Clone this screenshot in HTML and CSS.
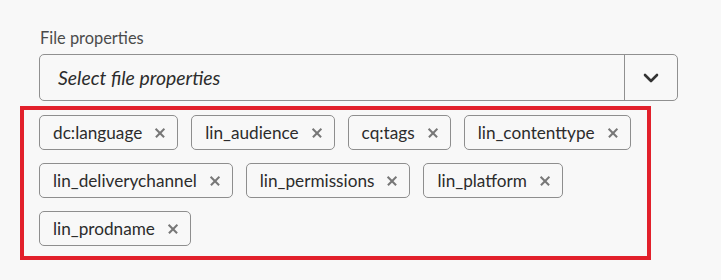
FILE: index.html
```html
<!DOCTYPE html>
<html lang="en">
<head>
    <meta charset="UTF-8">
    <meta name="viewport" content="width=device-width, initial-scale=1.0">
    <title>File properties</title>
    <link rel="stylesheet" href="styles.css">
</head>
<body>
    <div class="field">
        <label class="label">File properties</label>
        <div class="picker">
            <span class="placeholder">Select file properties</span>
            <button class="toggle">
                <svg width="16" height="10" viewBox="0 0 16 10">
                    <path d="M2 2 L8 8 L14 2" fill="none" stroke="#333" stroke-width="2.6" stroke-linecap="round" stroke-linejoin="round"/>
                </svg>
            </button>
        </div>
    </div>

    <ul class="tags">
        <li class="tag">dc:language <span class="remove"></span></li>
        <li class="tag">lin_audience <span class="remove"></span></li>
        <li class="tag">cq:tags <span class="remove"></span></li>
        <li class="tag">lin_contenttype <span class="remove"></span></li>
        <li class="tag">lin_deliverychannel <span class="remove"></span></li>
        <li class="tag">lin_permissions <span class="remove"></span></li>
        <li class="tag">lin_platform <span class="remove"></span></li>
        <li class="tag">lin_prodname <span class="remove"></span></li>
    </ul>
</body>
</html>
```

FILE: styles.css
```css
body {
    margin: 0;
    background: #f8f8f8;
    font-family: Lato, "Open Sans", sans-serif;
    color: #2c2c2c;
}

.field {
    padding: 28px 43px 0 39px;
}

.label {
    display: block;
    font-size: 16.4px;
    color: #4b4b4b;
    margin-left: 1px;
    margin-bottom: 7px;
}

.picker {
    display: flex;
    height: 45px;
    border: 1px solid #909090;
    border-radius: 5px;

    .placeholder {
        flex-grow: 1;
        display: flex;
        align-items: center;
        padding-left: 18px;
        font-size: 19.4px;
        font-style: italic;
    }

    .toggle {
        width: 53px;
        border: 0;
        border-left: 1px solid #909090;
        background: transparent;
        display: flex;
        justify-content: center;
        align-items: center;
        padding: 0;
    }
}

.tags {
    list-style: none;
    margin: 5px 0 0 20px;
    width: 596px;
    border: 4px solid #e2202b;
    padding: 5px 12px 10px 15px;
    display: flex;
    flex-wrap: wrap;
    gap: 13px;
}

.tag {
    display: flex;
    align-items: center;
    height: 33px;
    border: 1px solid #8e8e8e;
    border-radius: 5px;
    padding: 0 12px 0 13px;
    font-size: 17.2px;

    .remove {
        position: relative;
        width: 10px;
        height: 10px;
        margin-left: 13px;

        &::before, &::after {
            content: '';
            position: absolute;
            left: -1px;
            top: 4px;
            width: 12px;
            height: 1.6px;
            background: #777;
            transform: rotate(45deg);
        }

        &::after {
            transform: rotate(-45deg);
        }
    }
}
```
